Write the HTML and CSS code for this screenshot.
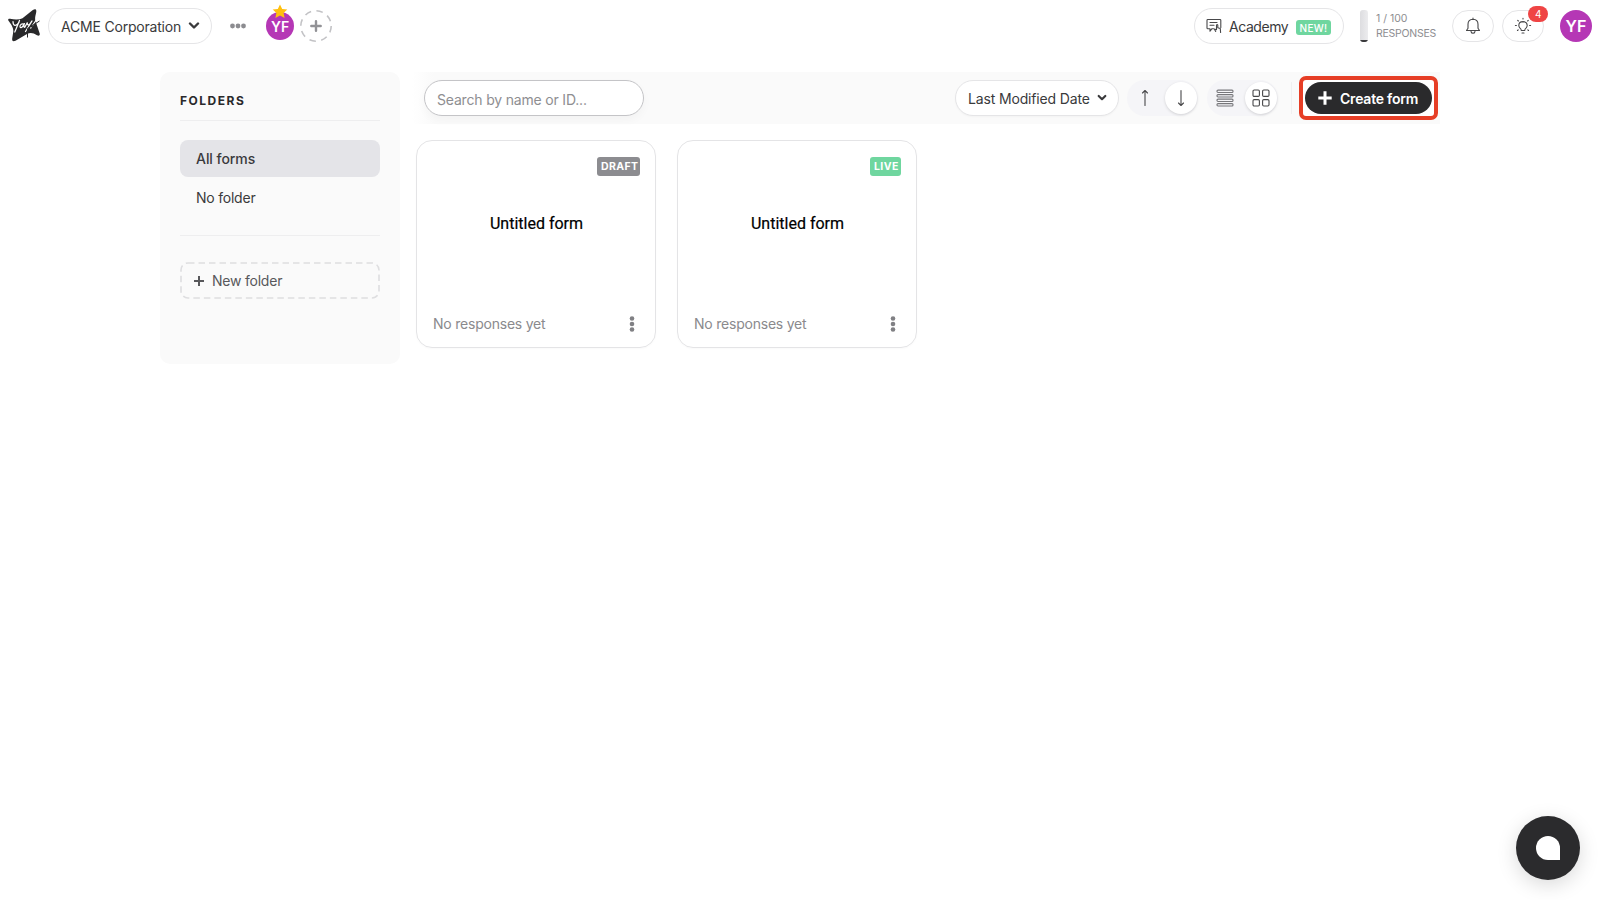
FILE: index.html
```html
<!DOCTYPE html>
<html lang="en">
<head>
<meta charset="utf-8">
<title>Forms</title>
<link rel="stylesheet" href="styles.css">
</head>
<body>
<header class="topbar">
  <svg class="logo" width="34" height="34" viewBox="0 0 34 34"><path class="logo-shape" d="M.5 11.800C-.3 10.200 .5 9.600 2 9.800Q10 11.600 14.500 9.200L24.500 1.200C27.500-.8 28.700.3 28.200 3.200C27.300 7.500 26.500 10 27.800 13L31.700 24.500C32.300 26.800 30.500 27 29 26.200Q23.500 22.500 19 25L7.500 31.800C4.500 33 4 31.500 4.200 29.500L5.300 22.500C5.600 18.500 2.500 14.500.5 11.800Z"/><path class="logo-script" d="M5 12.500C5 17 8 18 11 13.300M11.500 11.500L6.800 23M15.800 15.200C12.500 13.700 10.800 18.500 13 18.700C15 18.800 16 14.500 16.300 14.500C15.700 17 15.800 18.500 16.800 18.300L19.400 13.500C19 16.200 20.200 17.700 23.500 12.500M24 12L17.500 22.500M30.500 7.500L24.500 16.500M23 18.600L22.700 19"/><path class="logo-line" d="M31.500 12L19.500 19.500V28.500"/></svg>
  <button class="pill workspace">ACME Corporation <svg class="chev" width="12" height="8" viewBox="0 0 12 8"><path d="M2 1.500L6 5.500L10 1.500"/></svg></button>
  <svg class="dots" width="16" height="6" viewBox="0 0 16 6"><circle cx="2.500" cy="3" r="2.400"/><circle cx="8" cy="3" r="2.400"/><circle cx="13.500" cy="3" r="2.400"/></svg>
  <div class="member"><span>YF</span><svg class="star" width="16" height="15" viewBox="0 0 16 15"><path d="M8 .5L10.200 4.900L15.300 5.500L11.600 8.900L12.600 14L8 11.500L3.400 14L4.400 8.900L.7 5.500L5.800 4.900Z"/></svg></div>
  <svg class="invite" width="34" height="34" viewBox="0 0 34 34"><circle cx="17" cy="17" r="15.200"/><path d="M17 12.300V21.700M12.300 17H21.700"/></svg>
  <div class="spacer"></div>
  <button class="pill academy"><svg class="line-icon" width="16" height="16" viewBox="0 0 16 16"><path d="M7.500 10.700H6L4 13.200V10.700H1.800Q1 10.700 1 9.900V2.300Q1 1.500 1.800 1.500H14Q14.800 1.500 14.800 2.300V9.500M4 4.500H11M4 7.300H8M9.700 13.500L8.300 11L10.500 11.700V7Q11.200 6 11.800 7V9.800L14.300 10.600L14.600 14.500"/></svg><span>Academy</span><b class="new">NEW!</b></button>
  <div class="quota"><div class="meter"><i></i></div><div class="quota-text">1 / 100<br><span>RESPONSES</span></div></div>
  <button class="pill round"><svg class="line-icon" width="16" height="18" viewBox="0 0 16 18"><path d="M8 1V2.300M1.500 13.500H14.500L13 11.300V7.300Q13 2.400 8 2.300Q3 2.400 3 7.300V11.300L1.500 13.500M6 14.500Q6.500 16.300 8 16.300T10 14.500"/></svg></button>
  <button class="pill round bulb"><svg class="line-icon" width="18" height="18" viewBox="0 0 18 18"><path d="M7.300 13.500Q7.300 12.200 5.800 10.900Q4.800 9.800 4.800 8.300Q4.900 4.700 9 4.600Q13.100 4.700 13.200 8.300Q13.200 9.800 12.200 10.900Q10.700 12.200 10.700 13.500ZM8 16H10M9 1.200V2M3.700 3.300L4.400 4M14.300 3.300L13.600 4M1.400 8.500H2.400M15.600 8.500H16.600M3.500 13.500L4.200 12.800M14.500 13.500L13.800 12.800"/></svg><span class="count">4</span></button>
  <div class="avatar">YF</div>
</header>
<main class="layout">
  <aside class="sidebar">
    <h2>FOLDERS</h2>
    <nav class="folders"><a class="folder active">All forms</a><a class="folder">No folder</a></nav>
    <button class="new-folder"><svg class="frame" width="200" height="37"><rect x="1" y="1" width="198" height="35" rx="7"/></svg><svg class="plus" width="10" height="10" viewBox="0 0 10 10"><path d="M5 0V10M0 5H10"/></svg>New folder</button>
  </aside>
  <section class="content">
    <div class="toolbar">
      <input class="search" placeholder="Search by name or ID...">
      <div class="spacer"></div>
      <button class="pill sort">Last Modified Date <svg class="chev" width="10" height="8" viewBox="0 0 10 8"><path d="M1.700 2L5 5.200L8.300 2"/></svg></button>
      <div class="toggle order"><span><svg class="line-icon" width="8" height="18" viewBox="0 0 8 18"><path d="M4 16.500V1.500M1.500 4L4 1.500L6.500 4"/></svg></span><span class="on"><svg class="line-icon" width="8" height="18" viewBox="0 0 8 18"><path d="M4 1.500V16.500M1.500 14L4 16.500L6.500 14"/></svg></span></div>
      <div class="toggle view"><span><svg class="line-icon" width="18" height="18" viewBox="0 0 18 18"><rect x="1" y="1.100" width="16" height="2.400" rx="1"/><rect x="1" y="5.600" width="16" height="2.400" rx="1"/><rect x="1" y="10.100" width="16" height="2.400" rx="1"/><rect x="1" y="14.600" width="16" height="2.400" rx="1"/></svg></span><span class="on"><svg class="line-icon" width="18" height="18" viewBox="0 0 18 18"><rect x="1" y="1" width="6.400" height="6.400" rx="1.200"/><rect x="10.600" y="1" width="6.400" height="6.400" rx="1.200"/><rect x="1" y="10.600" width="6.400" height="6.400" rx="1.200"/><rect x="10.600" y="10.600" width="6.400" height="6.400" rx="1.200"/></svg></span></div>
      <div class="divider"></div>
      <div class="highlight"><button class="create"><svg class="plus" width="14" height="14" viewBox="0 0 14 14"><path d="M7 .3V13.700M.3 7H13.700"/></svg>Create form</button></div>
    </div>
    <div class="cards">
      <article class="card"><b class="status draft">DRAFT</b><h3>Untitled form</h3><footer>No responses yet<svg class="more" width="6" height="16" viewBox="0 0 6 16"><circle cx="3" cy="2.500" r="2.300"/><circle cx="3" cy="8" r="2.300"/><circle cx="3" cy="13.500" r="2.300"/></svg></footer></article>
      <article class="card"><b class="status live">LIVE</b><h3>Untitled form</h3><footer>No responses yet<svg class="more" width="6" height="16" viewBox="0 0 6 16"><circle cx="3" cy="2.500" r="2.300"/><circle cx="3" cy="8" r="2.300"/><circle cx="3" cy="13.500" r="2.300"/></svg></footer></article>
    </div>
  </section>
</main>
<button class="chat"><i></i></button>
</body>
</html>
```
FILE: styles.css
```css
* { box-sizing: border-box; }
body { margin: 0; height: 900px; overflow: hidden; background: #fff; color: #3a3a3c; font: 14px/20px Inter, "Liberation Sans", sans-serif; letter-spacing: -.22px; }
button { font: inherit; letter-spacing: inherit; color: inherit; margin: 0; padding: 0; border: 0; background: none; display: flex; align-items: center; white-space: nowrap; }
svg { display: block; flex: none; fill: none; }
.spacer { flex: 1; }
.topbar { display: flex; align-items: center; height: 52px; padding: 0 8px; }
.logo-shape { fill: #29292b; }
.logo-script { stroke: #fff; stroke-width: 1.25; stroke-linecap: round; }
.logo-line { stroke: #29292b; stroke-width: 1; }
.pill { border: 1px solid #e5e5e7; background: #fff; border-radius: 18px; height: 36px; }
.workspace { margin-left: 6px; width: 164px; padding: 2px 11px 0 12px; justify-content: space-between; letter-spacing: -.2px; }
.chev { stroke: #3a3a3c; stroke-width: 2.4; stroke-linecap: round; stroke-linejoin: round; margin-top: -2px; }
.dots { margin-left: 18px; fill: #8c8c90; }
.member { position: relative; width: 28px; height: 28px; margin-left: 20px; border-radius: 50%; background: #b537b5; color: #fff; font-weight: 600; text-align: center; line-height: 29px; letter-spacing: 0; }
.star { position: absolute; left: 6px; top: -8px; fill: #ffbf0d; }
.invite { margin-left: 5px; }
.invite circle { stroke: #c2c2c5; stroke-width: 1.6; stroke-dasharray: 6.500 5.437; }
.invite path { stroke: #929296; stroke-width: 2.4; stroke-linecap: round; }
.academy { width: 150px; padding: 2px 12px 0 11px; letter-spacing: -.45px; }
.academy .line-icon { margin-top: -2px; }
.academy span { margin-left: 7px; }
.line-icon { stroke: #48484a; stroke-width: 1.1; stroke-linecap: round; stroke-linejoin: round; }
.new { margin-left: auto; width: 35px; height: 15px; border-radius: 3px; background: #6fd69f; color: #fff; font-size: 10px; line-height: 16px; font-weight: 500; text-align: center; letter-spacing: .3px; }
.quota { display: flex; margin-left: 16px; width: 92px; }
.meter { width: 8px; height: 32px; border-radius: 3px; background: linear-gradient(90deg, #dddde0, #ececee); overflow: hidden; display: flex; align-items: flex-end; }
.meter i { width: 8px; height: 2px; background: #3a3a3c; border-radius: 0 0 3px 3px; }
.quota-text { margin-left: 8px; font-size: 10.500px; line-height: 15px; padding-top: 1px; color: #8e8e91; white-space: nowrap; letter-spacing: 0; }
.quota-text span { letter-spacing: -.25px; }
.round { width: 42px; height: 32px; justify-content: center; }
.bulb { position: relative; margin-left: 8px; }
.count { position: absolute; left: 25px; top: -5px; width: 20px; height: 16px; border-radius: 8px; background: #ef4444; color: #fff; font-size: 10px; line-height: 17px; }
.avatar { margin-left: 16px; width: 32px; height: 32px; border-radius: 50%; background: #b537b5; color: #fff; font-weight: 600; font-size: 16px; line-height: 33px; text-align: center; letter-spacing: 0; }
.layout { display: flex; align-items: flex-start; width: 1280px; margin: 20px auto 0; }
.sidebar { width: 240px; height: 292px; padding: 20px; border-radius: 10px; background: #fafafa; }
.sidebar h2 { margin: 0; height: 29px; border-bottom: 1px solid #eeeeef; font-size: 12px; line-height: 18px; font-weight: 700; letter-spacing: 1.500px; color: #29292b; }
.folders { padding: 19px 0; height: 115px; border-bottom: 1px solid #eeeeef; }
.folder { display: block; height: 37px; padding: 0 16px; border-radius: 8px; line-height: 38px; margin-bottom: 2px; }
.folder.active { background: #e4e4e8; font-weight: 500; letter-spacing: -.05px; }
.new-folder { position: relative; width: 200px; height: 37px; margin-top: 26px; padding: 0 0 0 14px; color: #58585b; gap: 8px; }
.frame { position: absolute; left: 0; top: 0; }
.frame rect { stroke: #dedee0; stroke-width: 1.600; stroke-dasharray: 6.500 4; }
.plus { stroke: #58585b; stroke-width: 2; }
.content { flex: 1; }
.toolbar { display: flex; align-items: center; height: 52px; padding: 0 2px 0 24px; background: linear-gradient(90deg, transparent 12px, #fafafa 34px); }
.search { width: 220px; height: 36px; padding: 2px 12px 0; border: 1px solid #c4c4c7; border-radius: 18px; font: inherit; letter-spacing: -.18px; background: #fff; box-shadow: 0 4px 10px #00000008; }
.search::placeholder { color: #8e8e91; opacity: 1; }
.sort { width: 164px; padding: 2px 11px 0 12px; justify-content: space-between; letter-spacing: -.15px; box-shadow: 0 1px 2px #00000008; }
.sort .chev { stroke-width: 2.200; }
.toggle { display: flex; align-items: center; justify-content: space-between; width: 71px; height: 36px; margin-left: 8px; padding: 0 1px 0 2px; border-radius: 18px; background: #f5f5f8; }
.toggle span { width: 32px; height: 32px; border-radius: 50%; display: flex; align-items: center; justify-content: center; }
.toggle .on { background: #fff; box-shadow: 0 1px 3px #00000025; }
.view { margin-left: 9px; }
.view span:first-child .line-icon { stroke: #77777b; }
.divider { width: 1px; height: 32px; margin: 0 7px 0 13px; background: #f0f0f1; }
.highlight { width: 139px; height: 44px; border: 4px solid #e63e26; border-radius: 7px; background: #fff; padding: 2px; }
.create { width: 127px; height: 32px; border-radius: 16px; background: #2a2a2c; color: #fff; font-weight: 600; gap: 8px; padding: 2px 0 0 13px; }
.create .plus { stroke: #fff; stroke-width: 3; margin-top: -3px; }
.cards { display: flex; gap: 21px; padding: 16px 0 0 16px; }
.card { width: 240px; height: 208px; border: 1px solid #e4e4e6; border-radius: 16px; padding: 16px 15px 0 16px; display: flex; flex-direction: column; align-items: flex-end; box-shadow: 0 1px 2px #00000006; }
.status { height: 19px; border-radius: 3px; padding: 0 4px; color: #fff; font-size: 10.500px; line-height: 19px; letter-spacing: .4px; }
.draft { background: #8c8c90; width: 43px; }
.live { background: #6fd69f; width: 31px; }
.card h3 { width: 100%; margin: 38px 0 0; font: 400 16px/20px Roboto, sans-serif; letter-spacing: 0; -webkit-text-stroke: .2px #000; color: #000; text-align: center; }
.card footer { width: 100%; display: flex; justify-content: space-between; align-items: center; margin-top: 80px; padding-right: 5px; color: #8a8a8d; }
.card footer .more { margin-top: -1px; }
.more { fill: #808084; }
.chat { position: absolute; left: 1516px; top: 816px; width: 64px; height: 64px; border-radius: 50%; background: #2b2b2d; justify-content: center; box-shadow: 0 5px 20px #00000026; }
.chat i { width: 24px; height: 24px; border-radius: 12px 12px 0 12px; background: #fff; }
```
